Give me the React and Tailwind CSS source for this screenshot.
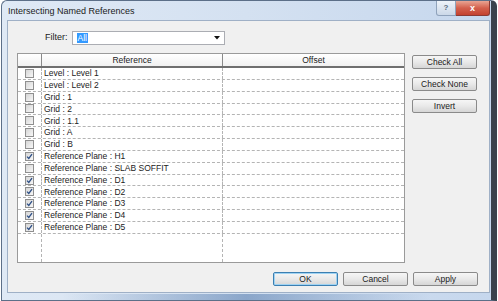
import React from 'react';

const rows = [
  { label: 'Level : Level 1', checked: false },
  { label: 'Level : Level 2', checked: false },
  { label: 'Grid : 1', checked: false },
  { label: 'Grid : 2', checked: false },
  { label: 'Grid : 1.1', checked: false },
  { label: 'Grid : A', checked: false },
  { label: 'Grid : B', checked: false },
  { label: 'Reference Plane : H1', checked: true },
  { label: 'Reference Plane : SLAB SOFFIT', checked: false },
  { label: 'Reference Plane : D1', checked: true },
  { label: 'Reference Plane : D2', checked: true },
  { label: 'Reference Plane : D3', checked: true },
  { label: 'Reference Plane : D4', checked: true },
  { label: 'Reference Plane : D5', checked: true },
];

const Checkbox = ({ checked }) => (
  <div className="w-[9px] h-[9px] border border-[#8f8f8f] bg-gradient-to-br from-[#d6d6d6] to-[#f7f7f7] flex items-center justify-center">
    {checked && (
      <svg width="7" height="7" viewBox="0 0 7 7">
        <path d="M1 3.6 L2.8 5.4 L6 1.2" fill="none" stroke="#2d4f86" strokeWidth="1.3" />
      </svg>
    )}
  </div>
);

const DlgButton = ({ children, focused }) => (
  <button
    className={`w-[65px] h-[14px] rounded-[2px] border text-[8.5px] leading-none text-[#1a1a1a] bg-gradient-to-b from-[#f6f6f6] via-[#e9e9e9] to-[#d6d6d6] ${
      focused ? 'border-[#3c7fb1] shadow-[inset_0_0_0_1px_#9fd3f3]' : 'border-[#8a8a8a]'
    }`}
  >
    {children}
  </button>
);

const App = () => {
  return (
    <div className="w-[498px] h-[301px] bg-white overflow-hidden font-['Liberation_Sans',Arial,sans-serif]">
      {/* window frame */}
      <div className="w-[496px] h-[301px] ml-[1px] rounded-t-[6px] border border-[#5c6f88] border-r-[6px] border-r-[#3a424c] bg-gradient-to-r from-[#dfe9f5] via-[#d4e1f1] to-[#c6d7ed] flex flex-col">
        {/* title bar */}
        <div className="h-[19px] flex items-start shrink-0">
          <div className="pl-[6px] pt-[5px] text-[9px] leading-[11px] text-[#1b1b1b]">
            Intersecting Named References
          </div>
          <div className="ml-auto flex mr-[1px]">
            <div className="w-[20px] h-[15px] rounded-bl-[3px] border border-t-0 border-[#8fa2bb] bg-gradient-to-b from-[#eef3f9] to-[#cbd8e8] flex items-center justify-center text-[8px] leading-none text-[#5a6a80] font-bold">
              ?
            </div>
            <div className="w-[34px] h-[15px] rounded-br-[3px] border border-t-0 border-l-0 border-[#8b3a34] bg-gradient-to-b from-[#e8a493] via-[#d3604d] to-[#c3412f] flex items-center justify-center text-[9px] leading-none text-white font-bold">
              x
            </div>
          </div>
        </div>

        {/* client area */}
        <div className="ml-[5px] mr-[1px] mb-[1px] flex-1 bg-[#f0f0f0] border border-[#9fb0c6] flex flex-col">
          {/* filter row */}
          <div className="flex items-center mt-[10px] h-[14px] pl-[37px]">
            <span className="text-[9px] text-[#222] mr-[4px]">Filter:</span>
            <div className="w-[153px] h-[14px] bg-white border border-[#abadb3] flex items-center pl-[4px]">
              <span className="bg-[#3399ff] text-white text-[8.5px] leading-[10px] px-[1px]">All</span>
              <svg className="ml-auto mr-[4px]" width="6" height="4" viewBox="0 0 6 4">
                <path d="M0 0 H6 L3 3.5 Z" fill="#111" />
              </svg>
            </div>
          </div>

          {/* table + side buttons */}
          <div className="flex mt-[8px] pl-[9px]">
            <div className="w-[388px] h-[210px] bg-white border border-[#9a9a9a] flex flex-col text-[8.5px] text-[#222]">
              {/* header */}
              <div className="flex h-[14px] shrink-0 bg-gradient-to-b from-white to-[#f1f1f1] border-b-2 border-[#6f6f6f]">
                <div className="w-[24px] border-r border-[#8a8a8a]" />
                <div className="w-[181px] border-r border-[#8a8a8a] flex items-center justify-center">Reference</div>
                <div className="flex-1 flex items-center justify-center">Offset</div>
              </div>
              {rows.map((r) => (
                <div key={r.label} className="flex h-[11.85px] shrink-0 border-b border-dashed border-[#b4b4b4]">
                  <div className="w-[24px] border-r border-dashed border-[#b4b4b4] flex items-center justify-center">
                    <Checkbox checked={r.checked} />
                  </div>
                  <div className="w-[181px] border-r border-dashed border-[#b4b4b4] flex items-center pl-[2px] leading-none">
                    {r.label}
                  </div>
                  <div className="flex-1" />
                </div>
              ))}
              <div className="flex flex-1">
                <div className="w-[24px] border-r border-dashed border-[#b4b4b4]" />
                <div className="w-[181px] border-r border-dashed border-[#b4b4b4]" />
                <div className="flex-1" />
              </div>
            </div>
            <div className="flex flex-col gap-[8px] ml-[7px] mt-[2px]">
              <DlgButton>Check All</DlgButton>
              <DlgButton>Check None</DlgButton>
              <DlgButton>Invert</DlgButton>
            </div>
          </div>

          {/* footer */}
          <div className="flex justify-end gap-[5px] pr-[11px] mt-[9px]">
            <DlgButton focused>OK</DlgButton>
            <DlgButton>Cancel</DlgButton>
            <DlgButton>Apply</DlgButton>
          </div>
        </div>
        <div className="h-[6px] shrink-0 mx-[60px] bg-gradient-to-r from-transparent via-[#5a7fb0] to-transparent opacity-60" />
      </div>
    </div>
  );
};

export default App;
